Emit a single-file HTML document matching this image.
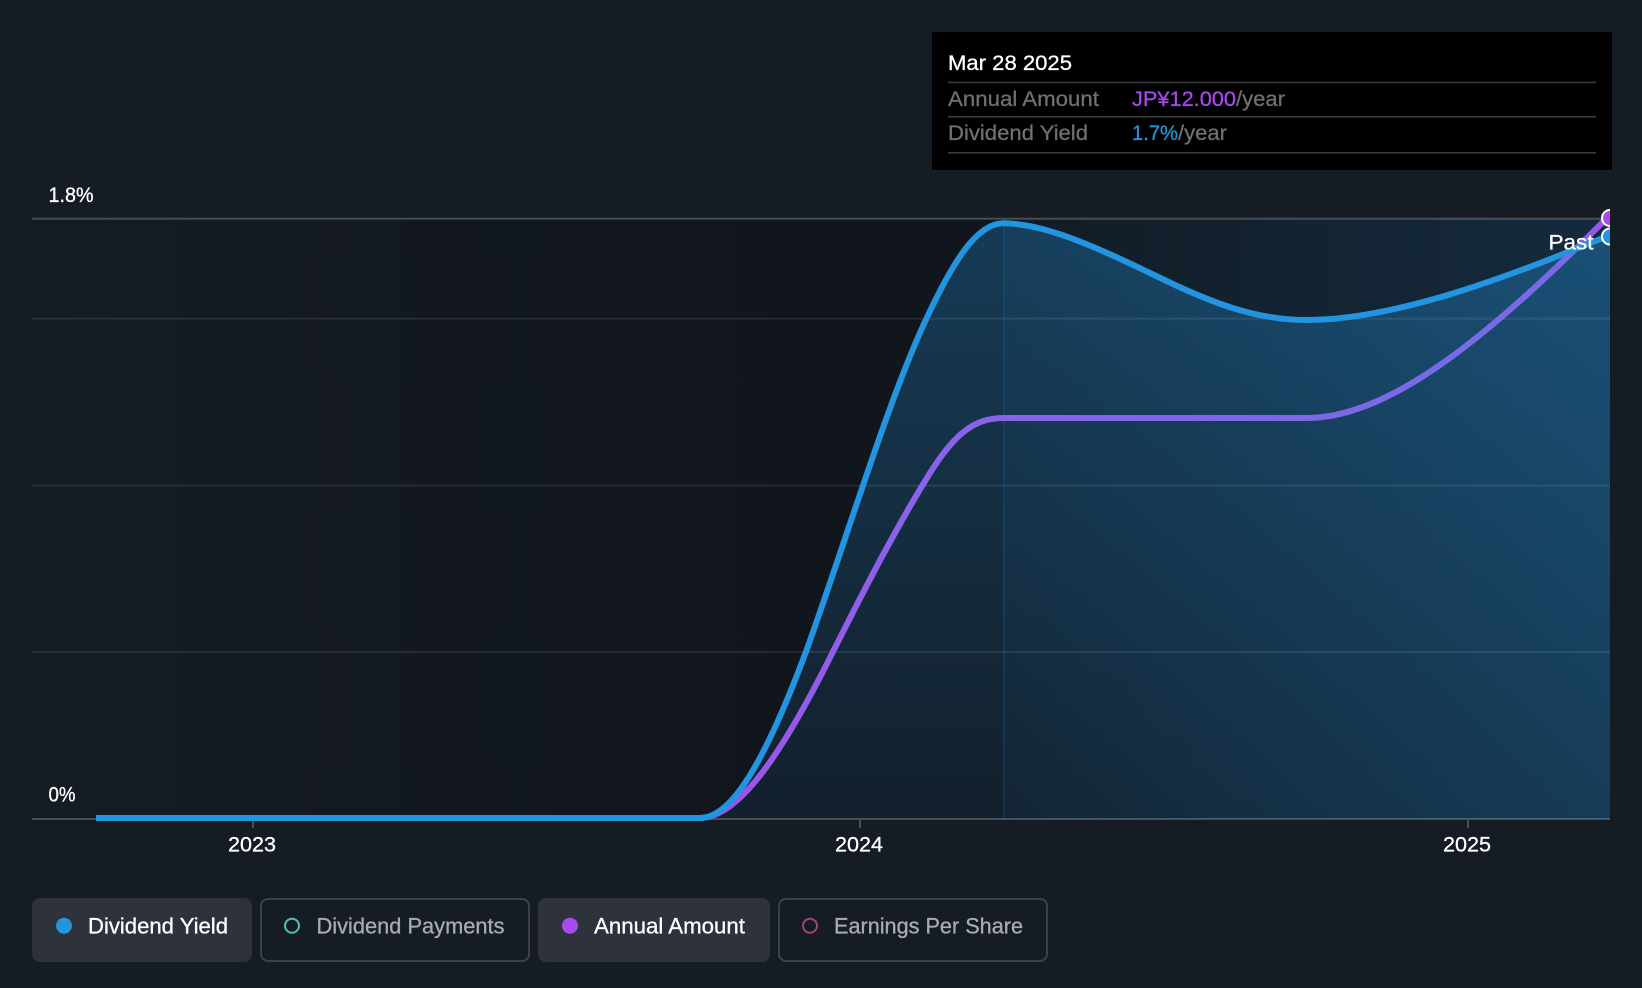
<!DOCTYPE html>
<html>
<head>
<meta charset="utf-8">
<title>Dividend Yield</title>
<style>
html,body{margin:0;padding:0;background:#151c24;width:1642px;height:988px;overflow:hidden}
svg{display:block}
text{font-family:"Liberation Sans",sans-serif;stroke-width:0.3px}
</style>
</head>
<body>
<svg width="1642" height="988" viewBox="0 0 1642 988" xmlns="http://www.w3.org/2000/svg">
<defs>
<linearGradient id="dark" gradientUnits="userSpaceOnUse" x1="32" y1="0" x2="800" y2="0">
<stop offset="0" stop-color="#151c24"/><stop offset="1" stop-color="#11151c"/>
</linearGradient>
<linearGradient id="over" gradientUnits="userSpaceOnUse" x1="1004" y1="0" x2="1610" y2="0">
<stop offset="0" stop-color="#2394df" stop-opacity="0.05"/><stop offset="1" stop-color="#2394df" stop-opacity="0.17"/>
</linearGradient>
<linearGradient id="area" gradientUnits="userSpaceOnUse" x1="0" y1="219" x2="0" y2="819">
<stop offset="0" stop-color="#2394df" stop-opacity="0.30"/><stop offset="1" stop-color="#2394df" stop-opacity="0.08"/>
</linearGradient>
<linearGradient id="area2" gradientUnits="userSpaceOnUse" x1="1004" y1="0" x2="1610" y2="0">
<stop offset="0" stop-color="#2394df" stop-opacity="0"/><stop offset="1" stop-color="#2394df" stop-opacity="0.09"/>
</linearGradient>
<linearGradient id="purp" gradientUnits="userSpaceOnUse" x1="700" y1="0" x2="1610" y2="0">
<stop offset="0" stop-color="#a050ea"/>
<stop offset="0.22" stop-color="#8c62ea"/>
<stop offset="0.55" stop-color="#7e65e8"/>
<stop offset="0.82" stop-color="#786ae6"/>
<stop offset="0.955" stop-color="#7c68e6"/>
<stop offset="1" stop-color="#a64cec"/>
</linearGradient>
<clipPath id="plot"><rect x="32" y="200" width="1578" height="625"/></clipPath>
<clipPath id="rightside"><rect x="1004" y="200" width="606" height="625"/></clipPath>
</defs>

<rect width="1642" height="988" fill="#151c24"/>

<!-- plot backgrounds -->
<rect x="32" y="219" width="972" height="600" fill="url(#dark)"/>
<rect x="1004" y="219" width="606" height="600" fill="#11151c"/>
<rect x="1004" y="219" width="606" height="600" fill="url(#over)"/>

<!-- area -->
<path fill="url(#area)" d="M700 819 L700 818 C728 818 760 775 806 651.7 C846 541 888 400 926.7 318 C952 264 976 223.3 1003.3 223.3 C1050 223.3 1110 254 1173 284 C1222 307 1262 320 1306.7 320 C1400 320 1520 272 1610 235 L1610 819 Z"/>
<path fill="url(#area2)" clip-path="url(#rightside)" d="M1003.3 819 L1003.3 223.3 C1050 223.3 1110 254 1173 284 C1222 307 1262 320 1306.7 320 C1400 320 1520 272 1610 235 L1610 819 Z"/>

<!-- grid -->
<rect x="1003" y="219" width="2" height="600" fill="#2394df" fill-opacity="0.14"/>
<g fill="#ffffff">
<rect x="32" y="217.7" width="1578" height="2" fill-opacity="0.22"/>
<rect x="32" y="317.7" width="1578" height="2" fill-opacity="0.085"/>
<rect x="32" y="484.7" width="1578" height="2" fill-opacity="0.085"/>
<rect x="32" y="651" width="1578" height="2" fill-opacity="0.085"/>
<rect x="32" y="818" width="1578" height="2" fill-opacity="0.22"/>
<rect x="252" y="820" width="2" height="8" fill-opacity="0.22"/>
<rect x="859" y="820" width="2" height="8" fill-opacity="0.22"/>
<rect x="1467" y="820" width="2" height="8" fill-opacity="0.22"/>
</g>

<!-- curves -->
<g clip-path="url(#plot)" fill="none" stroke-width="6">
<path stroke="url(#purp)" d="M700 818 C740 818 785 748 833 651.7 C865 588 897 526 930 473 C955 433 975 418 1003 418 L1307 418 C1395 418 1500 325 1610 215"/>
<path stroke="#2394df" d="M96 818 L700 818 C728 818 760 775 806 651.7 C846 541 888 400 926.7 318 C952 264 976 223.3 1003.3 223.3 C1050 223.3 1110 254 1173 284 C1222 307 1262 320 1306.7 320 C1400 320 1520 272 1610 235"/>
<circle cx="1610" cy="236.5" r="8" fill="#2394df" stroke="#fff" stroke-width="2"/>
<circle cx="1610" cy="218" r="8" fill="#a64cec" stroke="#fff" stroke-width="2"/>
</g>

<!-- labels -->
<g fill="#ffffff" stroke="#ffffff" font-size="21.5">
<text x="48.5" y="202" textLength="45" lengthAdjust="spacingAndGlyphs">1.8%</text>
<text x="48.5" y="801.7" textLength="27" lengthAdjust="spacingAndGlyphs">0%</text>
<text x="228" y="851.7" textLength="48" lengthAdjust="spacingAndGlyphs">2023</text>
<text x="835" y="851.7" textLength="48" lengthAdjust="spacingAndGlyphs">2024</text>
<text x="1443" y="851.7" textLength="48" lengthAdjust="spacingAndGlyphs">2025</text>
<text x="1548.5" y="249.3" textLength="45" lengthAdjust="spacingAndGlyphs">Past</text>
</g>

<!-- tooltip -->
<rect x="932" y="32" width="680" height="138" fill="#000000"/>
<rect x="948" y="81.7" width="648" height="1.6" fill="#3c3c3c"/>
<rect x="948" y="116" width="648" height="1.6" fill="#3c3c3c"/>
<rect x="948" y="152" width="648" height="1.6" fill="#3c3c3c"/>
<g font-size="21.5">
<text x="948" y="70" fill="#ffffff" stroke="#ffffff" textLength="124" lengthAdjust="spacingAndGlyphs">Mar 28 2025</text>
<text x="948" y="106" fill="#707070" stroke="#707070" textLength="151" lengthAdjust="spacingAndGlyphs">Annual Amount</text>
<text x="1132" y="106" fill="#a748ec" stroke="#a748ec" textLength="104" lengthAdjust="spacingAndGlyphs">JP¥12.000</text>
<text x="1236" y="106" fill="#707070" stroke="#707070" textLength="49" lengthAdjust="spacingAndGlyphs">/year</text>
<text x="948" y="140" fill="#707070" stroke="#707070" textLength="140" lengthAdjust="spacingAndGlyphs">Dividend Yield</text>
<text x="1132" y="140" fill="#2394df" stroke="#2394df" textLength="46" lengthAdjust="spacingAndGlyphs">1.7%</text>
<text x="1178" y="140" fill="#707070" stroke="#707070" textLength="49" lengthAdjust="spacingAndGlyphs">/year</text>
</g>

<!-- legend -->
<rect x="32" y="898" width="220" height="64" rx="8" fill="#2e323a"/>
<rect x="261" y="899" width="268" height="62" rx="7" fill="none" stroke="#3e4149" stroke-width="2"/>
<rect x="538" y="898" width="232" height="64" rx="8" fill="#2e323a"/>
<rect x="779" y="899" width="268" height="62" rx="7" fill="none" stroke="#3e4149" stroke-width="2"/>

<circle cx="64" cy="925.7" r="8" fill="#2394df"/>
<circle cx="292" cy="925.7" r="7" fill="none" stroke="#4fc2b4" stroke-width="2"/>
<circle cx="570" cy="925.7" r="8" fill="#a64cec"/>
<circle cx="810" cy="925.7" r="7" fill="none" stroke="#a3427a" stroke-width="2"/>

<g font-size="22">
<text x="88" y="933.3" fill="#ffffff" stroke="#ffffff" textLength="140" lengthAdjust="spacingAndGlyphs">Dividend Yield</text>
<text x="316.5" y="933.3" fill="#a9abaf" stroke="#a9abaf" textLength="188" lengthAdjust="spacingAndGlyphs">Dividend Payments</text>
<text x="594" y="933.3" fill="#ffffff" stroke="#ffffff" textLength="151" lengthAdjust="spacingAndGlyphs">Annual Amount</text>
<text x="834" y="933.3" fill="#a9abaf" stroke="#a9abaf" textLength="189" lengthAdjust="spacingAndGlyphs">Earnings Per Share</text>
</g>
</svg>
</body>
</html>
